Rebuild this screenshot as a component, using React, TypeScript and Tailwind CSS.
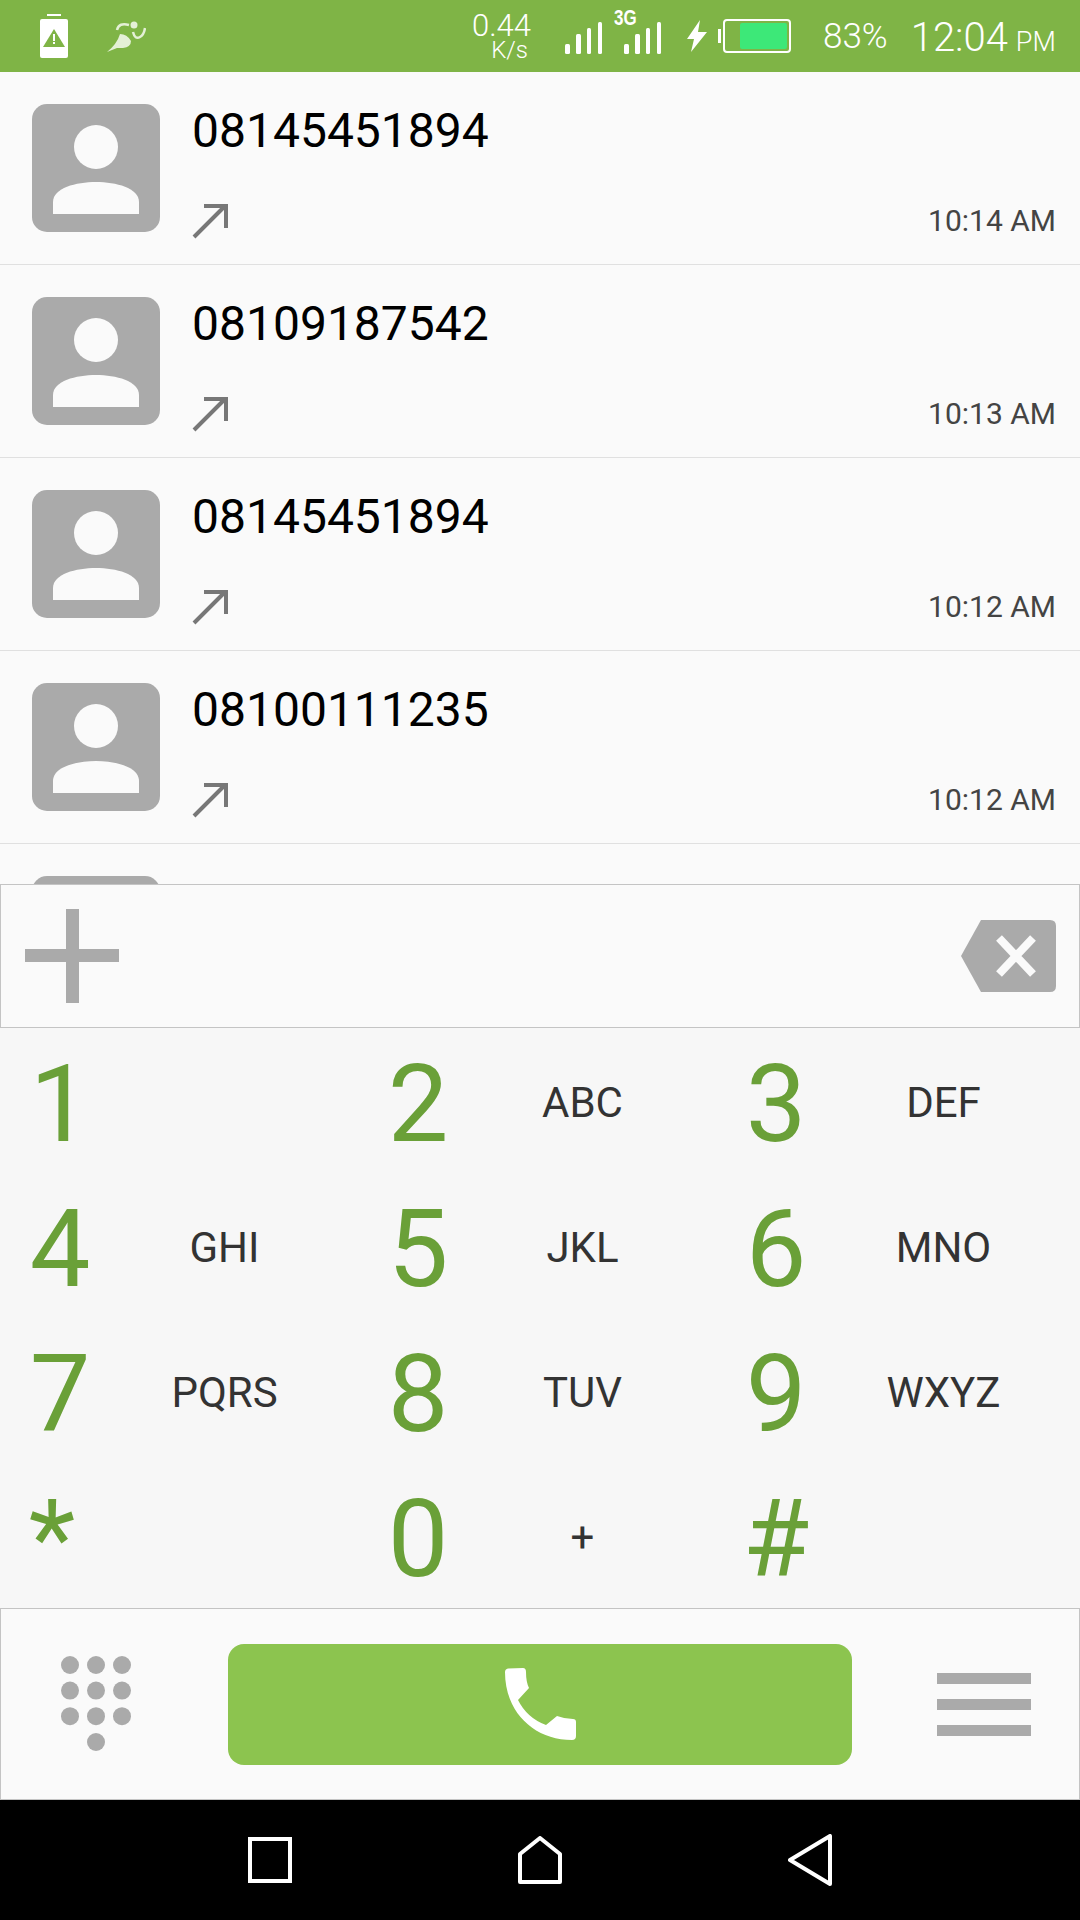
import React from "react";

const calls = [
  { number: "08145451894", time: "10:14 AM" },
  { number: "08109187542", time: "10:13 AM" },
  { number: "08145451894", time: "10:12 AM" },
  { number: "08100111235", time: "10:12 AM" },
];

const keys = [
  { digit: "1", letters: "" },
  { digit: "2", letters: "ABC" },
  { digit: "3", letters: "DEF" },
  { digit: "4", letters: "GHI" },
  { digit: "5", letters: "JKL" },
  { digit: "6", letters: "MNO" },
  { digit: "7", letters: "PQRS" },
  { digit: "8", letters: "TUV" },
  { digit: "9", letters: "WXYZ" },
  { digit: "*", letters: "" },
  { digit: "0", letters: "+" },
  { digit: "#", letters: "" },
];

const Avatar = () => (
  <svg width="128" height="128" viewBox="0 0 128 128" className="shrink-0">
    <rect width="128" height="128" rx="15" fill="#aaaaaa" />
    <circle cx="64" cy="43" r="22" fill="#fafafa" />
    <path d="M21 110V98C21 84 44 78 64 78S107 84 107 98V110Z" fill="#fafafa" />
  </svg>
);

const OutgoingArrow = () => (
  <svg width="36" height="36" viewBox="0 0 36 36">
    <path d="M2 34L33 3M12 3H34V25" fill="none" stroke="#777777" strokeWidth="4" />
  </svg>
);

const Signal = () => (
  <svg width="38" height="32" viewBox="0 0 38 32" fill="#ffffff">
    <rect x="0" y="22" width="5" height="10" rx="1.5" />
    <rect x="11" y="12" width="5" height="20" rx="1.5" />
    <rect x="22" y="6" width="4" height="26" rx="1.5" />
    <rect x="33" y="0" width="4" height="32" rx="1.5" />
  </svg>
);

const StatusBar = () => (
  <div className="flex h-[72px] shrink-0 items-center bg-[#7fb446] text-white">
    <svg width="28" height="44" viewBox="0 0 28 44" className="ml-[40px]">
      <rect x="7" y="0" width="14" height="2" fill="#ffffff" />
      <rect x="0" y="5" width="28" height="39" rx="2" fill="#ffffff" />
      <path d="M14 15L25 33H3Z" fill="#7fb446" />
      <rect x="13" y="20" width="2" height="7" fill="#ffffff" />
      <rect x="13" y="28" width="2" height="2" fill="#ffffff" />
    </svg>
    <svg width="39" height="33" viewBox="0 0 39 33" className="ml-[39px]">
      <path d="M0 32Q10 24 13 14Q20 14 24 21Q24 27 16 28L10 28Z" fill="#e4f0d6" />
      <path d="M10 10Q12 2 22 5" fill="none" stroke="#e4f0d6" strokeWidth="2.5" />
      <circle cx="27" cy="5" r="3.5" fill="#e4f0d6" />
      <path d="M26 12Q28 20 33 17Q37 15 38 8" fill="none" stroke="#e4f0d6" strokeWidth="2.5" />
    </svg>
    <div className="ml-[323px] flex w-[62px] flex-col items-end pt-[3px]">
      <span className="text-[31px] leading-[24px] font-light">0.44</span>
      <span className="mt-[1px] mr-[3px] text-[24px] leading-[22px] font-light">K/s</span>
    </div>
    <div className="ml-[34px] mt-[3px]">
      <Signal />
    </div>
    <div className="relative ml-[21px] mt-[3px]">
      <Signal />
      <span className="absolute top-[-14px] left-[-10px] origin-top scale-y-[1.3] font-['Liberation_Sans',sans-serif] text-[17px] leading-[16px] font-bold">3G</span>
    </div>
    <svg width="22" height="32" viewBox="0 0 22 32" className="ml-[24px]">
      <path d="M14 0L1 19H8L5 32L21 12H12Z" fill="#ffffff" />
    </svg>
    <div className="ml-[10px] h-[14px] w-[3px] bg-white" />
    <div className="ml-[2px] flex h-[34px] w-[68px] rounded-[4px] border-2 border-white p-[2px] pl-[15px]">
      <div className="flex-1 rounded-[2px] bg-[#3de878]" />
    </div>
    <span className="ml-[32px] text-[35px] leading-none font-light">83%</span>
    <span className="ml-[23px] mt-[3px] text-[40px] leading-none font-light">12:04</span>
    <span className="ml-[8px] mt-[13px] text-[27px] leading-none font-light">PM</span>
  </div>
);

const CallRow = ({ number, time }: { number: string; time: string }) => (
  <div className="flex h-[193px] shrink-0 border-b-[1.5px] border-[#e0e0e0] pt-[32px] pl-[32px] pr-[24px]">
    <Avatar />
    <div className="ml-[32px] flex h-[128px] flex-1 flex-col">
      <span className="mt-[-3px] text-[48px] leading-[60px] text-black">{number}</span>
      <div className="mt-auto mb-[-7px] flex items-center justify-between">
        <OutgoingArrow />
        <span className="text-[30px] leading-[36px] text-[#444444]">{time}</span>
      </div>
    </div>
  </div>
);

const InputBar = () => (
  <div className="flex h-[144px] shrink-0 items-center justify-between border border-[#c4c4c4] bg-[#fafafa] pr-[23px] pl-[24px]">
    <svg width="94" height="94" viewBox="0 0 94 94">
      <rect x="41" y="0" width="13" height="94" fill="#aaaaaa" />
      <rect x="0" y="40" width="94" height="13" fill="#aaaaaa" />
    </svg>
    <svg width="95" height="72" viewBox="0 0 95 72">
      <path d="M20 0H89Q95 0 95 6V66Q95 72 89 72H20L0 36Z" fill="#aaaaaa" />
      <path d="M38 18L72 54M72 18L38 54" stroke="#fafafa" strokeWidth="8" fill="none" />
    </svg>
  </div>
);

const Key = ({ digit, letters }: { digit: string; letters: string }) => (
  <div className="flex h-[145px] items-center pr-[29px]">
    <span className={digit === "*" ? "mt-[6px] w-[120px] pr-[16px] text-center text-[108px] leading-none text-[#6aa038]" : "mt-[6px] w-[120px] text-center text-[108px] leading-none text-[#6aa038]"}>{digit}</span>
    <span className="mt-[4px] flex-1 text-center text-[42px] leading-none text-[#333333]">{letters}</span>
  </div>
);

const BottomBar = () => (
  <div className="flex h-[192px] shrink-0 items-center border border-[#c4c4c4] bg-[#fafafa]">
    <svg width="70" height="96" viewBox="0 0 70 96" className="ml-[60px]">
      {[0, 1, 2].map((row) =>
        [0, 1, 2].map((col) => (
          <circle key={`${row}-${col}`} cx={9 + col * 26} cy={9 + row * 25.6} r="9" fill="#aaaaaa" />
        )),
      )}
      <circle cx="35" cy="86" r="9" fill="#aaaaaa" />
    </svg>
    <div className="ml-[97px] flex h-[121px] w-[624px] items-center justify-center rounded-[16px] bg-[#8cc44f]">
      <svg width="71" height="72" viewBox="0 0 71 72">
        <path d="M0 4Q0 1 3 0.5L18 0Q21 0 21 4Q21 14 24 20L13 32Q22 50 41 57L52 48Q60 51 68 51Q71 51 71 54V68Q71 72 67 72C30 72 0 45 0 4Z" fill="#ffffff" />
      </svg>
    </div>
    <div className="ml-[85px] flex flex-col gap-[15px]">
      <div className="h-[11px] w-[94px] bg-[#aaaaaa]" />
      <div className="h-[11px] w-[94px] bg-[#aaaaaa]" />
      <div className="h-[11px] w-[94px] bg-[#aaaaaa]" />
    </div>
  </div>
);

const NavBar = () => (
  <div className="flex flex-1 items-center bg-black">
    <svg width="44" height="46" viewBox="0 0 44 46" className="ml-[248px]">
      <rect x="2" y="2" width="40" height="42" fill="none" stroke="#ffffff" strokeWidth="4" />
    </svg>
    <svg width="44" height="48" viewBox="0 0 44 48" className="ml-[226px]">
      <path d="M2 46V18L22 2L42 18V46Z" fill="none" stroke="#ffffff" strokeWidth="4" strokeLinejoin="round" />
    </svg>
    <svg width="44" height="52" viewBox="0 0 44 52" className="ml-[226px]">
      <path d="M42 2V50L2 26Z" fill="none" stroke="#ffffff" strokeWidth="4" strokeLinejoin="round" />
    </svg>
  </div>
);

export default function App() {
  return (
    <div className="flex h-[1920px] w-[1080px] flex-col overflow-hidden bg-[#fafafa] font-['Roboto',sans-serif]">
      <StatusBar />
      <div className="flex h-[812px] shrink-0 flex-col overflow-hidden">
        {calls.map((call, i) => (
          <CallRow key={i} number={call.number} time={call.time} />
        ))}
        <CallRow number="" time="" />
      </div>
      <InputBar />
      <div className="grid h-[580px] shrink-0 grid-cols-[358px_358px_364px] content-start bg-[#f7f7f7]">
        {keys.map((key) => (
          <Key key={key.digit} digit={key.digit} letters={key.letters} />
        ))}
      </div>
      <BottomBar />
      <NavBar />
    </div>
  );
}
